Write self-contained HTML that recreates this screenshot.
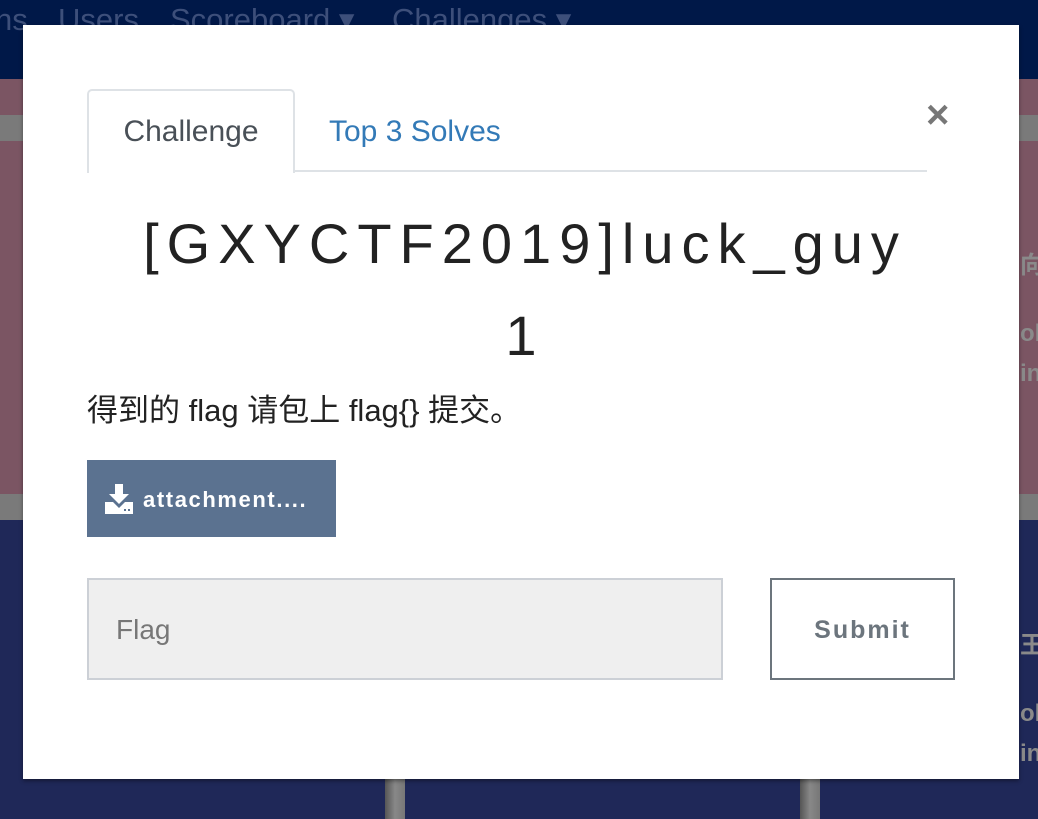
<!DOCTYPE html>
<html><head><meta charset="utf-8"><style>
*{margin:0;padding:0;box-sizing:border-box}
body{width:1038px;height:816px;overflow:hidden;position:relative;background:#1f2858;font-family:"Liberation Sans","Noto Sans CJK SC",sans-serif}
.nav{position:absolute;left:0;top:0;width:1038px;height:79px;background:#001848}
.nav span{position:absolute;top:2px;font-size:31px;color:#3d4f7a}
.pink{position:absolute;left:0;width:1038px;background:#7b5563}
.gray{position:absolute;left:0;width:1038px;background:#7a7a7a}
.post{position:absolute;top:779px;width:20px;height:40px;background:linear-gradient(90deg,#555,#888,#777)}
.side{position:absolute;left:1020px;color:#8a8a8a;font-weight:bold;font-size:24px}
.modal{position:absolute;left:23px;top:25px;width:996px;height:754px;background:#fff;box-shadow:0 2px 4px rgba(0,0,0,.4)}
.tabs{position:absolute;left:64px;top:64px;width:840px;height:83px;border-bottom:2px solid #dee2e6}
.tab1{position:absolute;left:0;top:0;width:208px;height:84px;border:2px solid #dee2e6;border-bottom:none;border-radius:5px 5px 0 0;background:#fff;font-size:30px;color:#495057;text-align:center;line-height:82px}
.tab2{position:absolute;left:242px;top:2px;font-size:30px;color:#337ab7;line-height:82px}
.close{position:absolute;left:903px;top:68px;font-size:40px;color:#777;font-weight:bold}
.title{position:absolute;left:0;width:996px;text-align:center;font-size:56px;color:#222;letter-spacing:8px;font-weight:300;padding-left:8px}
.desc{position:absolute;left:64px;top:360px;font-size:31px;color:#222}
.btn{position:absolute;left:64px;top:435px;width:249px;height:77px;background:#5b7290;color:#fff;font-weight:bold;font-size:22px;letter-spacing:1.6px}
.btn svg{position:absolute;left:18px;top:24px}
.btn span{position:absolute;left:56px;top:27px}
.inp{position:absolute;left:64px;top:553px;width:636px;height:102px;background:#efefef;border:2px solid #ccd0d6;font-size:28px;color:#777;padding:34px 0 0 27px}
.sub{position:absolute;left:747px;top:553px;width:185px;height:102px;border:2px solid #6c757d;font-size:25px;font-weight:bold;color:#6c757d;letter-spacing:2px;text-align:center;line-height:100px}
</style></head><body>
<div class="nav"><span style="left:-5px">ns</span><span style="left:58px">Users</span><span style="left:170px">Scoreboard ▾</span><span style="left:392px">Challenges ▾</span></div>
<div class="pink" style="top:79px;height:36px"></div>
<div class="gray" style="top:115px;height:26px"></div>
<div class="pink" style="top:141px;height:353px"></div>
<div class="gray" style="top:494px;height:26px"></div>
<div class="post" style="left:385px"></div><div class="post" style="left:800px"></div>
<div class="side" style="top:245px">向</div>
<div class="side" style="top:320px">ol</div>
<div class="side" style="top:360px">in</div>
<div class="side" style="top:625px">王</div>
<div class="side" style="top:700px">ol</div>
<div class="side" style="top:740px">in</div>
<div class="modal">
<div class="tabs"><div class="tab1">Challenge</div><div class="tab2">Top 3 Solves</div></div>
<div class="close">×</div>
<div class="title" style="top:186px">[GXYCTF2019]luck_guy</div>
<div class="title" style="top:278px">1</div>
<div class="desc">得到的 flag 请包上 flag{} 提交。</div>
<div class="btn"><svg width="28" height="30" viewBox="0 0 28 30"><path d="M10 0h8v10h6l-10 10L4 10h6z" fill="#fff"/><path d="M0 18h8l6 6 6-6h8v12H0z" fill="#fff"/><rect x="19" y="25" width="2" height="2" fill="#5b7290"/><rect x="23" y="25" width="2" height="2" fill="#5b7290"/></svg><span>attachment....</span></div>
<div class="inp">Flag</div>
<div class="sub">Submit</div>
</div>
</body></html>
